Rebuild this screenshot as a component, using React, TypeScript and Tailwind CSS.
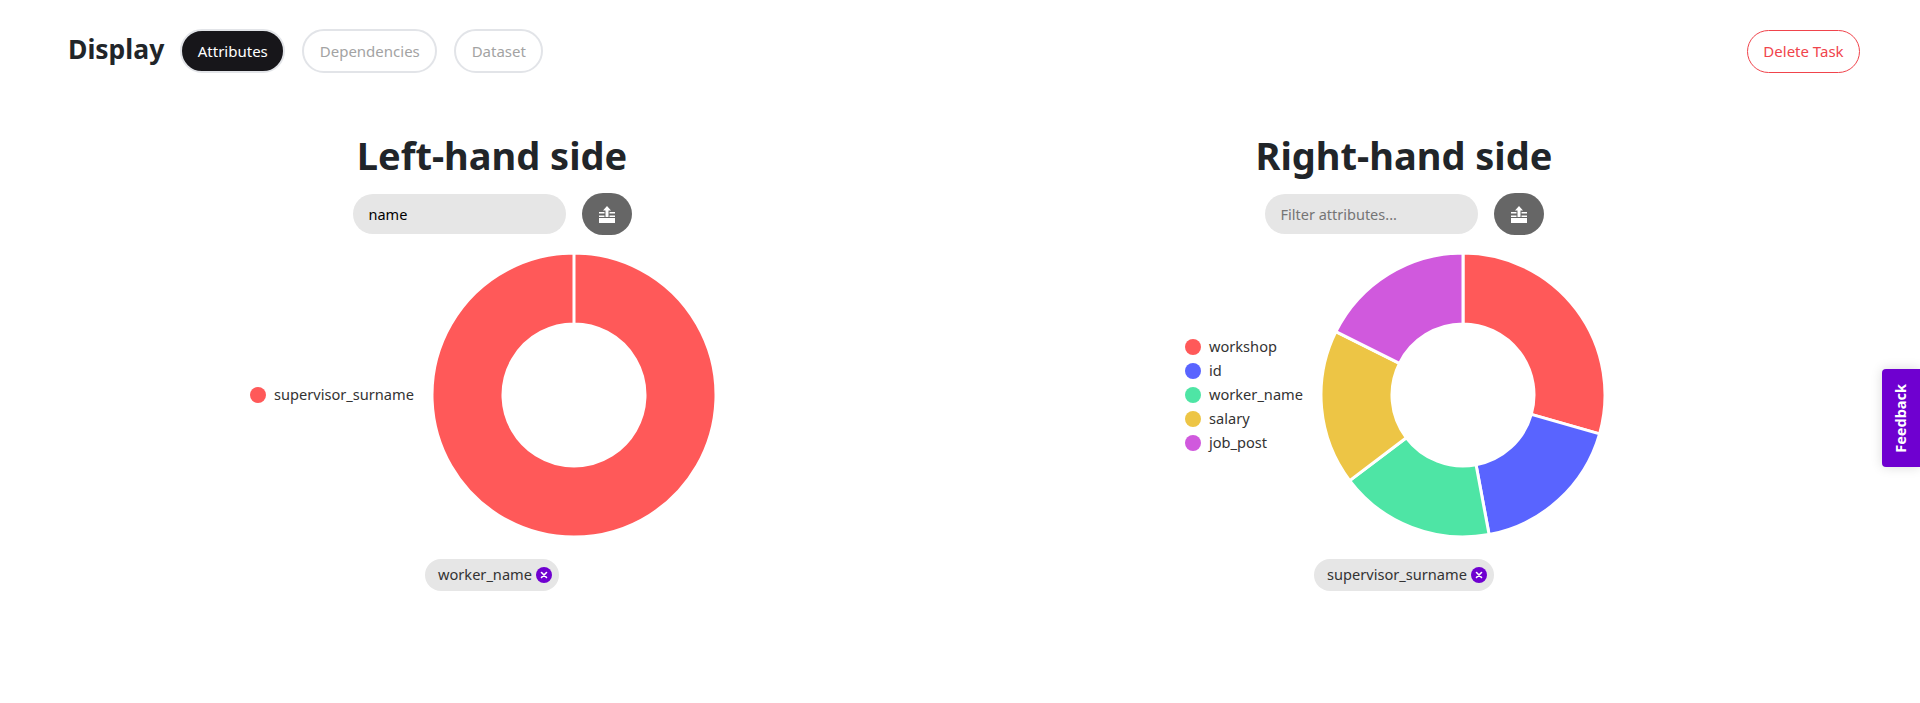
import React from "react";

const font = { fontFamily: '"Noto Sans", sans-serif' };

type Slice = { label: string; value: number; color: string };

function sector(cx: number, cy: number, R: number, r: number, a0: number, a1: number) {
  const p = (rad: number, a: number) => {
    const t = ((a - 90) * Math.PI) / 180;
    return `${(cx + rad * Math.cos(t)).toFixed(3)} ${(cy + rad * Math.sin(t)).toFixed(3)}`;
  };
  const large = a1 - a0 > 180 ? 1 : 0;
  return `M${p(R, a0)} A${R} ${R} 0 ${large} 1 ${p(R, a1)} L${p(r, a1)} A${r} ${r} 0 ${large} 0 ${p(r, a0)} Z`;
}

function Donut({ slices }: { slices: Slice[] }) {
  const total = slices.reduce((s, x) => s + x.value, 0);
  let a = 0;
  return (
    <svg width="284" height="284" viewBox="0 0 284 284" className="block shrink-0">
      {slices.map((s) => {
        const a0 = a;
        const a1 = a + (s.value / total) * 360;
        a = a1;
        const end = a1 - a0 >= 360 ? a1 - 0.001 : a1;
        return (
          <path
            key={s.label}
            d={sector(142, 142, 142, 71, a0, end)}
            fill={s.color}
            stroke="#ffffff"
            strokeWidth="3"
            strokeLinejoin="round"
          />
        );
      })}
    </svg>
  );
}

function UploadIcon() {
  return (
    <svg width="18" height="17" viewBox="0 0 18 17" fill="#ffffff">
      <path d="M9 0 L13 4.5 H10.5 V11 H7.5 V4.5 H5 Z" />
      <path d="M1 6 H6.5 V7.5 H1 Z" />
      <path d="M11.5 6 H17 V7.5 H11.5 Z" />
      <path d="M1 9.5 H6.5 V11 H1 Z" />
      <path d="M11.5 9.5 H17 V11 H11.5 Z" />
      <path d="M1 12 H17 V17 H1 Z" />
    </svg>
  );
}

function Panel({
  title,
  value,
  placeholder,
  slices,
  chip,
  chartPad,
  legendGap,
}: {
  title: string;
  value?: string;
  placeholder?: string;
  slices: Slice[];
  chip: string;
  chartPad: string;
  legendGap: string;
}) {
  return (
    <div className="flex flex-col items-center">
      <h2 className="text-[38px] leading-[60px] font-bold text-[#212529] -mt-[1px]">{title}</h2>
      <div className="flex items-center gap-4 mt-[8px]">
        <input
          readOnly
          value={value ?? ""}
          placeholder={placeholder}
          className="w-[213px] h-10 rounded-[20px] bg-[#e6e6e6] px-4 text-[14.5px] text-black placeholder:text-[#757575] outline-none"
          style={font}
        />
        <button className="w-[50px] h-[42px] rounded-[21px] bg-[#666666] flex items-center justify-center">
          <UploadIcon />
        </button>
      </div>
      <div className={`w-full flex items-center mt-[18px] ${chartPad}`}>
        <ul className={`flex flex-col gap-[4px] ${legendGap}`}>
          {slices.map((s) => (
            <li key={s.label} className="flex items-center gap-2 h-5 text-[14.6px] text-[#333333]">
              <span className="w-4 h-4 rounded-full" style={{ backgroundColor: s.color }} />
              {s.label}
            </li>
          ))}
        </ul>
        <Donut slices={slices} />
      </div>
      <div className="mt-[22px] h-8 rounded-2xl bg-[#e6e6e6] pl-[13px] pr-[7px] flex items-center gap-1 text-[14.6px] text-[#333333]">
        {chip}
        <span className="w-4 h-4 rounded-full bg-[#6f00d0] flex items-center justify-center">
          <svg width="8" height="8" viewBox="0 0 8 8" stroke="#ffffff" strokeWidth="1.6" strokeLinecap="round">
            <path d="M1.5 1.5 L6.5 6.5 M6.5 1.5 L1.5 6.5" />
          </svg>
        </span>
      </div>
    </div>
  );
}

export default function App() {
  return (
    <div className="relative w-full h-[703px] bg-white overflow-hidden" style={font}>
      <header className="flex items-center justify-between pl-[68px] pr-[60px] pt-[29px]">
        <div className="flex items-center">
          <h1 className="text-[26.5px] leading-[36px] font-bold text-[#212529] mr-[16px] -mt-[5px]">Display</h1>
          <nav className="flex items-center gap-[17px]">
            <button className="h-[44px] w-[105px] rounded-[22px] border-2 border-[#e2e4e8] bg-[#17161a] text-white text-[15px]">
              Attributes
            </button>
            <button className="h-[44px] w-[135px] rounded-[22px] border-2 border-[#e2e4e8] bg-white text-[#a3a3a3] text-[15px]">
              Dependencies
            </button>
            <button className="h-[44px] w-[89px] rounded-[22px] border-2 border-[#e2e4e8] bg-white text-[#a3a3a3] text-[15px]">
              Dataset
            </button>
          </nav>
        </div>
        <button className="h-[43px] w-[113px] rounded-[22px] border border-[#f0444c] bg-white text-[#f0444c] text-[15px]">
          Delete Task
        </button>
      </header>
      <main className="grid grid-cols-2 pl-[36px] pr-[60px] mt-[53px]">
        <Panel
          title="Left-hand side"
          value="name"
          slices={[{ label: "supervisor_surname", value: 1, color: "#ff5959" }]}
          chip="worker_name"
          chartPad="pl-[214px]"
          legendGap="mr-[18px]"
        />
        <Panel
          title="Right-hand side"
          placeholder="Filter attributes..."
          slices={[
            { label: "workshop", value: 5, color: "#ff5959" },
            { label: "id", value: 3, color: "#5964ff" },
            { label: "worker_name", value: 3, color: "#4ee5a5" },
            { label: "salary", value: 3, color: "#edc545" },
            { label: "job_post", value: 3, color: "#d059dd" },
          ]}
          chip="supervisor_surname"
          chartPad="pl-[237px]"
          legendGap="mr-[18px]"
        />
      </main>
      <div className="absolute right-0 top-[369px] w-[38px] h-[98px] rounded-l bg-[#6f00d0] shadow-[0_0_12px_rgba(0,0,0,0.15)] flex items-center justify-center">
        <span className="[writing-mode:vertical-rl] rotate-180 text-white text-[14.5px] font-bold">Feedback</span>
      </div>
    </div>
  );
}
